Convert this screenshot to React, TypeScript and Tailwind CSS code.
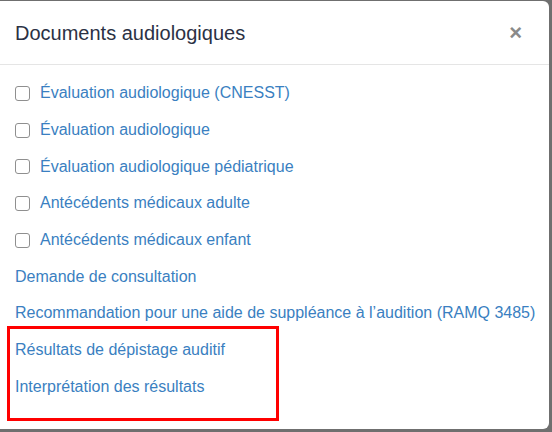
import React from "react";

const checkItems = [
  "Évaluation audiologique (CNESST)",
  "Évaluation audiologique",
  "Évaluation audiologique pédiatrique",
  "Antécédents médicaux adulte",
  "Antécédents médicaux enfant",
];

const linkItems = [
  "Demande de consultation",
  "Recommandation pour une aide de suppléance à l’audition (RAMQ 3485)",
  "Résultats de dépistage auditif",
  "Interprétation des résultats",
];

export default function App() {
  return (
    <div
      className="relative h-[432px] w-[552px] overflow-hidden bg-[#6f6f6f] pt-[1px]"
      style={{ fontFamily: '"Liberation Sans", Arial, sans-serif' }}
    >
      <div className="relative h-[428px] w-[549px] rounded-r-[6px] bg-white">
        <div className="flex h-[64px] items-center justify-between border-b border-[#e5e5e5] px-[15px]">
          <h4 className="text-[20px] leading-none text-[#2b3144]">Documents audiologiques</h4>
          <span className="mr-[12px] text-[22px] font-bold leading-none text-[#8a8a8a]">×</span>
        </div>
        <div className="px-[15px] pt-[10px]">
          {checkItems.map((t) => (
            <div key={t} className="flex h-[36.7px] items-center">
              <span className="mr-[10px] inline-block h-[15px] w-[15px] shrink-0 rounded-[3px] border border-[#8f8f8f] bg-white" />
              <span className="whitespace-nowrap text-[16px] text-[#3a7fc1]">{t}</span>
            </div>
          ))}
          {linkItems.map((t) => (
            <div key={t} className="flex h-[36.7px] items-center">
              <span className="whitespace-nowrap text-[16px] text-[#3a7fc1]">{t}</span>
            </div>
          ))}
        </div>
        <div className="absolute left-[7px] top-[325px] h-[95px] w-[272px] border-[3px] border-[#ff0000]" />
      </div>
    </div>
  );
}
